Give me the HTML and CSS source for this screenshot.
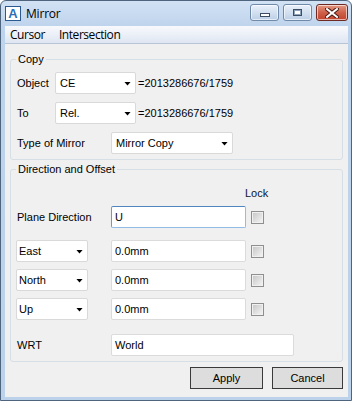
FILE: index.html
```html
<!DOCTYPE html>
<html lang="en">
<head>
    <meta charset="UTF-8">
    <title>Mirror</title>
    <link rel="stylesheet" href="styles.css">
</head>
<body>
    <div class="window">
        <div class="titlebar">
            <span class="app-icon">A</span>
            <span class="title">Mirror</span>
            <div class="caption-buttons">
                <span class="cbtn min"><i></i></span>
                <span class="cbtn max"><i></i></span>
                <span class="cbtn close">
                    <svg width="14" height="10" viewBox="0 0 14 10">
                        <path d="M2 1 L12 9 M12 1 L2 9" stroke="#4a1a14" stroke-width="4" stroke-linecap="square"/>
                        <path d="M2 1 L12 9 M12 1 L2 9" stroke="#fff" stroke-width="2" stroke-linecap="square"/>
                    </svg>
                </span>
            </div>
        </div>

        <div class="client">
            <div class="menubar">
                <span class="menu-item">Cursor</span>
                <span class="menu-item">Intersection</span>
            </div>

            <div class="content">
                <fieldset class="group copy">
                    <legend>Copy</legend>
                    <div class="row">
                        <span class="lbl w-short">Object</span>
                        <div class="select w-ref">CE</div>
                        <span class="ref">=2013286676/1759</span>
                    </div>
                    <div class="row">
                        <span class="lbl w-short">To</span>
                        <div class="select w-ref">Rel.</div>
                        <span class="ref">=2013286676/1759</span>
                    </div>
                    <div class="row">
                        <span class="lbl w-long">Type of Mirror</span>
                        <div class="select w-type">Mirror Copy</div>
                    </div>
                </fieldset>

                <fieldset class="group dir">
                    <legend>Direction and Offset</legend>
                    <div class="lock-head">Lock</div>
                    <div class="row plane">
                        <span class="lbl w-long">Plane Direction</span>
                        <div class="field focus">U</div>
                        <span class="check"></span>
                    </div>
                    <div class="row east">
                        <div class="select small w-axis">East</div>
                        <div class="field">0.0mm</div>
                        <span class="check"></span>
                    </div>
                    <div class="row north">
                        <div class="select small w-axis">North</div>
                        <div class="field">0.0mm</div>
                        <span class="check"></span>
                    </div>
                    <div class="row up">
                        <div class="select small w-axis">Up</div>
                        <div class="field">0.0mm</div>
                        <span class="check"></span>
                    </div>
                    <div class="row wrt">
                        <span class="lbl w-long">WRT</span>
                        <div class="field wide">World</div>
                    </div>
                </fieldset>

                <div class="buttons">
                    <span class="btn apply">Apply</span>
                    <span class="btn cancel">Cancel</span>
                </div>
            </div>
        </div>
    </div>
</body>
</html>
```

FILE: styles.css
```css
* {
    box-sizing: border-box;
}
body {
    margin: 0;
    font-family: "Liberation Sans", Arial, sans-serif;
    font-size: 11px;
    color: #000;
    background: #fff;
}
.window {
    width: 352px;
    height: 401px;
    border: 1px solid #4f647d;
    border-radius: 6px 6px 0 0;
    background: linear-gradient(#d2e2f4, #bed3ec 26px, #bcd1ea);
    display: flex;
    flex-direction: column;
}

/* title bar */
.titlebar {
    height: 25px;
    display: flex;
    align-items: flex-start;
    padding-left: 4px;
}
.app-icon {
    width: 16px;
    height: 15px;
    margin-top: 5px;
    border: 1px solid #2a5a90;
    background: #fff;
    color: #2e6fb4;
    font: bold 13px/13px "Liberation Sans", Arial, sans-serif;
    text-align: center;
}
.title {
    margin-left: 5px;
    margin-top: 4px;
    font-family: "Open Sans", sans-serif;
    font-size: 12px;
    line-height: 18px;
    letter-spacing: -0.2px;
}
.caption-buttons {
    margin-left: auto;
    margin-right: 3px;
    margin-top: 3px;
    display: flex;
    gap: 4px;
}
.cbtn {
    width: 29px;
    height: 17px;
    border: 1px solid #6f8aa8;
    border-radius: 3px;
    background: linear-gradient(#eaf1fa, #d3e0f0 50%, #bccfe7);
    box-shadow: inset 0 0 0 1px rgba(255,255,255,0.6);
    display: flex;
    align-items: center;
    justify-content: center;
}
.min i {
    width: 10px;
    height: 4px;
    margin-top: 5px;
    background: #fff;
    border: 1px solid #3b4d63;
}
.max i {
    width: 9px;
    height: 7px;
    border: 1px solid #3b4d63;
    background: #fff;
    box-shadow: inset 0 0 0 1px #8ea3bb;
}
.close {
    width: 32px;
    border-color: #6e2a22;
    background: linear-gradient(#e39a86, #cf6049 50%, #c2432e);
}

/* client area */
.client {
    flex: 1;
    margin: 0 3px 3px 4px;
    background: #f0f0f0;
    display: flex;
    flex-direction: column;
}
.menubar {
    height: 18px;
    border-bottom: 1px solid #b8c5d7;
    background: linear-gradient(#f8f9fc, #dfe6f2);
    display: flex;
    gap: 14px;
    padding-left: 5px;
    font-family: "Open Sans", sans-serif;
    font-size: 12px;
    line-height: 17px;
    letter-spacing: -0.45px;
}
.content {
    padding: 0 5px;
}

/* group boxes */
.group {
    margin: 0;
    padding: 6px 5px 5px;
    border: 1px solid #d5dfe5;
    border-radius: 3px;
}
.group legend {
    padding: 0 2px;
    line-height: 13px;
}
.copy {
    margin-top: 9px;
    display: flex;
    flex-direction: column;
    gap: 8px;
}
.dir {
    margin-top: 3px;
    padding-top: 11px;
}
.row {
    display: flex;
    align-items: center;
    height: 22px;
}
.lbl {
    padding-left: 1px;
}
.w-short { width: 39px; }
.w-long { width: 95px; }

.select {
    height: 22px;
    background: #fff;
    border: 1px solid #d9d9d9;
    border-radius: 2px;
    padding-left: 4px;
    padding-bottom: 1px;
    display: flex;
    align-items: center;
}
.select::after {
    content: "";
    width: 7px;
    height: 4px;
    margin-left: auto;
    margin-right: 4px;
    margin-top: 2px;
    background: #000;
    clip-path: polygon(0 0, 100% 0, 50% 100%);
}
.select.small {
    padding-left: 2px;
}
.w-ref { width: 81px; }
.w-type { width: 122px; }
.w-axis { width: 72px; margin-right: 23px; }
.ref {
    margin-left: 2px;
}

.field {
    width: 135px;
    height: 22px;
    background: #fff;
    border: 1px solid #dbdbdb;
    border-radius: 2px;
    padding-left: 3px;
    display: flex;
    align-items: center;
}
.field.focus {
    border-color: #90bce6;
    border-top-color: #4f86bd;
    border-left-color: #6a9bcc;
}
.field.wide {
    width: 183px;
}
.check {
    width: 13px;
    height: 13px;
    margin-left: 5px;
    border: 1px solid #8e8f8f;
    background: linear-gradient(135deg, #c4c4c4, #f6f6f6);
    box-shadow: inset 0 0 0 1px #f0f0f0;
}

.lock-head {
    height: 13px;
    line-height: 13px;
    padding-left: 229px;
    color: #0c1530;
}
.plane { margin-top: 6px; }
.east { margin-top: 12px; }
.north { margin-top: 7px; }
.up { margin-top: 7px; }
.wrt { margin-top: 14px; }

/* dialog buttons */
.buttons {
    display: flex;
    justify-content: flex-end;
    gap: 9px;
    margin-top: 5px;
}
.btn {
    height: 22px;
    border: 1px solid #3a3a3a;
    background: #dddddd;
    display: flex;
    align-items: center;
    justify-content: center;
}
.apply { width: 73px; }
.cancel { width: 71px; }
```
